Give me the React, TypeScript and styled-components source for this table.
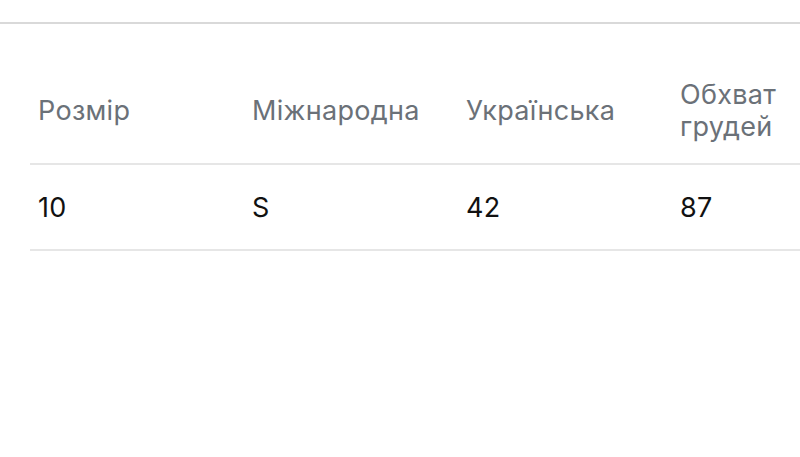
import React from "react";
import styled, { createGlobalStyle } from "styled-components";

const GlobalStyle = createGlobalStyle`
    html, body {
        margin: 0;
        padding: 0;
        background: #fff;
        overflow: hidden;
    }
    body {
        font-family: 'Inter', 'Noto Sans', sans-serif;
        -webkit-font-smoothing: antialiased;
    }
`;

const headers = ["Розмір", "Міжнародна", "Українська", "Обхват грудей"];
const rows = [["10", "S", "42", "87"]];

const App = () => {
    return (
        <Page>
            <GlobalStyle />
            <TopBar />
            <TableWrapper>
                <SizeTable>
                    <thead>
                        <tr>
                            {headers.map((h) => (
                                <HeadCell key={h}>{h}</HeadCell>
                            ))}
                        </tr>
                    </thead>
                    <tbody>
                        {rows.map((row, i) => (
                            <tr key={i}>
                                {row.map((cell, j) => (
                                    <BodyCell key={j}>{cell}</BodyCell>
                                ))}
                            </tr>
                        ))}
                    </tbody>
                </SizeTable>
            </TableWrapper>
        </Page>
    );
};

export default App;

const Page = styled.div`
    width: 800px;
    height: 457px;
    overflow: hidden;
    background: #fff;
`;

const TopBar = styled.div`
    height: 22px;
    border-bottom: 2px solid #d9d9d9;
`;

const TableWrapper = styled.div`
    padding: 39px 0 0 30px;
    overflow: hidden;
`;

const SizeTable = styled.table`
    border-collapse: collapse;
    table-layout: fixed;
    width: ${214 * 4}px;
`;

const HeadCell = styled.th`
    width: 214px;
    box-sizing: border-box;
    padding: 16px 60px 20px 8px;
    text-align: left;
    vertical-align: middle;
    font-weight: 400;
    font-size: 27px;
    letter-spacing: 0.3px;
    line-height: 32px;
    color: #6b7178;
    border-bottom: 2px solid #e6e6e6;
`;

const BodyCell = styled.td`
    padding: 27px 8px 25px;
    font-size: 27px;
    letter-spacing: 0.3px;
    line-height: 32px;
    color: #111;
    border-bottom: 2px solid #e6e6e6;
`;
